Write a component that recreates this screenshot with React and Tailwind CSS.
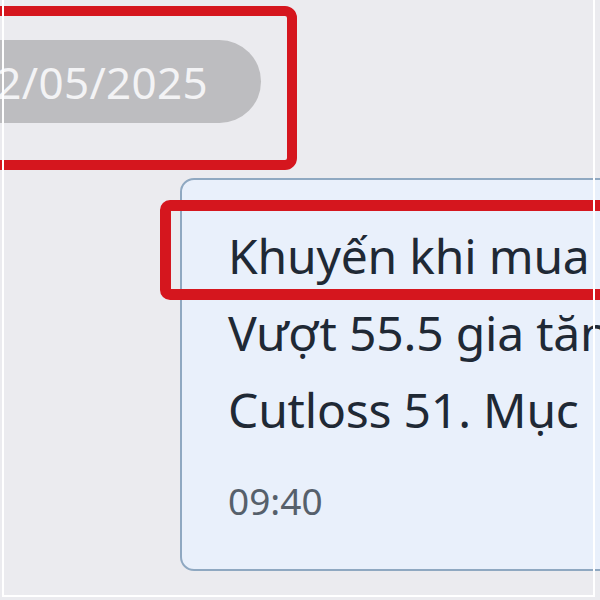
export default function App() {
  return (
    <div className="relative w-[600px] h-[600px] overflow-hidden bg-[#ebebef] font-['Noto_Sans',sans-serif]">
      <div className="pt-[6px]">
        <div className="ml-[-220px] w-[517px] h-[164px] rounded-[12px] border-[10px] border-[#d5161e] flex items-start justify-end pr-[26px] pt-[24px]">
          <div className="h-[83px] w-[420px] rounded-full bg-[#bdbdc0] flex items-center justify-end pr-[53px]">
            <span className="text-[44px] leading-none text-[#f3f3f5] tracking-[0.3px]">12/05/2025</span>
          </div>
        </div>
      </div>
      <div className="relative ml-[180px] mt-[8px] w-[520px] h-[393px] rounded-[14px] border-2 border-[#8fa8c1] bg-[#e9f0fb] pl-[46px] pt-[37px]">
        <div className="text-[48px] leading-[77px] text-[#1f2935] whitespace-nowrap tracking-[-0.2px]">
          <p>Khuyến khi mua vào</p>
          <p>Vượt 55.5 gia tăng</p>
          <p>Cutloss 51. Mục</p>
        </div>
        <p className="mt-[34px] text-[37px] leading-none text-[#56606b]">09:40</p>
        <div className="absolute left-[-22px] top-[20px] w-[480px] h-[100px] rounded-[10px] border-[11px] border-[#d5161e]" />
      </div>
      <div className="pointer-events-none absolute left-[2px] top-[-10px] right-[5px] bottom-[3px] border-2 border-white" />
    </div>
  );
}
